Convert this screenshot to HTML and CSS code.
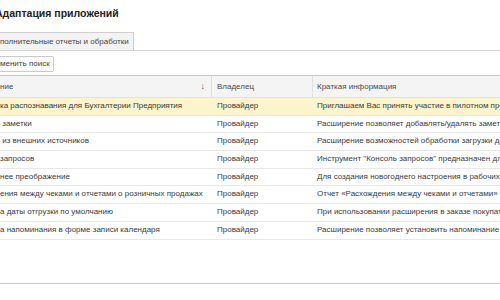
FILE: index.html
```html
<!DOCTYPE html>
<html lang="ru">
<head>
<meta charset="utf-8">
<link rel="stylesheet" href="styles.css">
</head>
<body>
<div class="page">
  <div class="title">Адаптация приложений</div>
  <div class="tabs">
    <div class="tab">полнительные отчеты и обработки</div>
  </div>
  <div class="toolbar">
    <div class="btn">менить поиск</div>
  </div>
  <div class="table">
    <div class="head">
      <div class="hc c1"><span>ние</span><span class="sort">↓</span></div>
      <div class="hc c2">Владелец</div>
      <div class="hc c3">Краткая информация</div>
    </div>
    <div class="row sel">
      <div class="c c1">ка распознавания для Бухгалтерии Предприятия</div>
      <div class="c c2">Провайдер</div>
      <div class="c c3">Приглашаем Вас принять участие в пилотном проекте</div>
    </div>
    <div class="row">
      <div class="c c1"> заметки</div>
      <div class="c c2">Провайдер</div>
      <div class="c c3">Расширение позволяет добавлять/удалять заметки</div>
    </div>
    <div class="row">
      <div class="c c1"> из внешних источников</div>
      <div class="c c2">Провайдер</div>
      <div class="c c3">Расширение возможностей обработки загрузки данных</div>
    </div>
    <div class="row">
      <div class="c c1">запросов</div>
      <div class="c c2">Провайдер</div>
      <div class="c c3">Инструмент "Консоль запросов" предназначен для</div>
    </div>
    <div class="row">
      <div class="c c1">нее преображение</div>
      <div class="c c2">Провайдер</div>
      <div class="c c3">Для создания новогоднего настроения в рабочих</div>
    </div>
    <div class="row">
      <div class="c c1">ения между чеками и отчетами о розничных продажах</div>
      <div class="c c2">Провайдер</div>
      <div class="c c3">Отчет «Расхождения между чеками и отчетами»</div>
    </div>
    <div class="row">
      <div class="c c1">а даты отгрузки по умолчанию</div>
      <div class="c c2">Провайдер</div>
      <div class="c c3">При использовании расширения в заказе покупателя</div>
    </div>
    <div class="row">
      <div class="c c1">а напоминания в форме записи календаря</div>
      <div class="c c2">Провайдер</div>
      <div class="c c3">Расширение позволяет установить напоминание</div>
    </div>
  </div>
</div>
</body>
</html>
```
FILE: styles.css
```css
html, body {
  margin: 0;
  padding: 0;
  background: #ffffff;
}
.page {
  width: 500px;
  height: 300px;
  overflow: hidden;
  font-family: "Liberation Sans", Arial, sans-serif;
  font-size: 8px;
  color: #3a3a3a;
}
.title {
  height: 32px;
  box-sizing: border-box;
  padding-top: 6px;
  margin-left: -5px;
  font-size: 10.5px;
  font-weight: bold;
  color: #222;
  line-height: 14px;
}
.tabs {
  height: 18px;
  border-bottom: 1px solid #d2d2d2;
  display: flex;
}
.tab {
  width: 134px;
  box-sizing: border-box;
  height: 18px;
  border-top: 1px solid #cfcfcf;
  border-right: 1px solid #cfcfcf;
  background: #f3f3f3;
  line-height: 18px;
  color: #444;
  white-space: nowrap;
  overflow: hidden;
}
.toolbar {
  height: 24px;
  box-sizing: border-box;
  padding-top: 5px;
  display: flex;
}
.btn {
  width: 54px;
  height: 16px;
  box-sizing: border-box;
  border: 1px solid #cacaca;
  border-left: none;
  background: #fdfdfd;
  line-height: 14px;
  color: #444;
  white-space: nowrap;
  overflow: hidden;
  border-radius: 0 2px 2px 0;
}
.table {
  height: 209px;
  box-sizing: border-box;
  border-top: 1px solid #c4c4c4;
  border-bottom: 1px solid #c4c4c4;
}
.head, .row {
  display: grid;
  grid-template-columns: 212px 101px 1fr;
}
.head {
  height: 21px;
  background: #f4f4f4;
  border-bottom: 1px solid #e2e2e2;
  color: #4a4a4a;
}
.hc {
  line-height: 21px;
  white-space: nowrap;
  overflow: hidden;
  border-right: 1px solid #e0e0e0;
}
.hc.c1 {
  display: flex;
  justify-content: space-between;
  padding-right: 6px;
}
.hc.c3 {
  border-right: none;
}
.sort {
  font-size: 9px;
  color: #555;
}
.row {
  height: 17.7px;
  box-sizing: border-box;
  border-bottom: 1px solid #e8e8e8;
}
.row.sel {
  background: #fcf4cc;
}
.c {
  line-height: 16.7px;
  white-space: pre;
  overflow: hidden;
}
.c2, .hc.c2 {
  padding-left: 5px;
}
.c3, .hc.c3 {
  padding-left: 4px;
}
```
